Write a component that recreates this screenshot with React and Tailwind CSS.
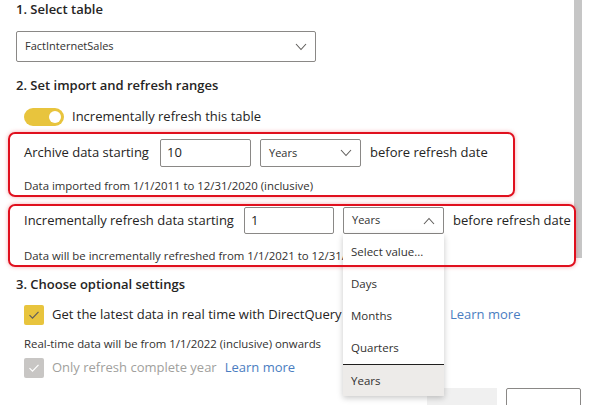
import React from 'react';

const Chevron = ({ up = false }) => (
  <svg width="12" height="8" viewBox="0 0 12 8" fill="none" className="shrink-0">
    {up ? (
      <path d="M1 7L6 1.5L11 7" stroke="#605e5c" strokeWidth="1.1" />
    ) : (
      <path d="M1 1L6 6.5L11 1" stroke="#605e5c" strokeWidth="1.1" />
    )}
  </svg>
);

const Check = ({ color }) => (
  <svg width="12" height="10" viewBox="0 0 12 10" fill="none">
    <path d="M1.5 5.2L4.5 8.2L10.5 1.8" stroke={color} strokeWidth="1.2" />
  </svg>
);

const Select = ({ value, className = '', open = false }) => (
  <div
    className={`flex items-center justify-between border border-[#8a8886] rounded-[2px] bg-white pl-2 pr-2 text-[11px] text-[#323130] ${className}`}
  >
    <span>{value}</span>
    <Chevron up={open} />
  </div>
);

// red annotation frame drawn above the content
const RedBox = ({ className = '', children }) => (
  <div className={`relative ${className}`}>
    {children}
    <div className="pointer-events-none absolute inset-0 z-20 rounded-[7px] border-2 border-[#e0101e] shadow-[0_0_4px_rgba(224,16,30,0.35)]" />
  </div>
);

const options = ['Select value...', 'Days', 'Months', 'Quarters', 'Years'];

export default function App() {
  return (
    <div className="relative h-[405px] w-[590px] overflow-hidden bg-white font-['Segoe_UI','Open_Sans',sans-serif] text-[#252423]">
      {/* scrollbar */}
      <div className="absolute right-[8px] top-0 h-[258px] w-[8px] bg-[#c6c6c6]" />

      <div className="pl-4">
        <h2 className="h-[18px] text-[13px] font-semibold leading-[18px]">1. Select table</h2>
        <Select value="FactInternetSales" className="mt-[13px] h-[31px] w-[300px]" />

        <h2 className="mt-[14px] h-[18px] text-[13px] font-semibold leading-[18px]">2. Set import and refresh ranges</h2>

        <div className="ml-2 mt-[14px] flex h-[18px] items-center gap-2">
          <div className="flex h-[18px] w-[40px] items-center justify-end rounded-full bg-[#e8c43d] pr-[3px]">
            <div className="h-[12px] w-[12px] rounded-full bg-white" />
          </div>
          <span className="text-[13px]">Incrementally refresh this table</span>
        </div>
      </div>

      <RedBox className="ml-2 mt-[6px] h-[65px] w-[507px] pl-4 pt-[7px]">
        <div className="flex h-[28px] items-center text-[13px]">
          <span className="w-[136px]">Archive data starting</span>
          <div className="flex h-[28px] w-[91px] items-center border border-[#8a8886] rounded-[2px] px-1.5 text-[13px]">10</div>
          <Select value="Years" className="ml-[9px] h-[28px] w-[101px]" />
          <span className="ml-[9px]">before refresh date</span>
        </div>
        <p className="mt-[12px] text-[11.4px] leading-[14px] text-[#323130]">Data imported from 1/1/2011 to 12/31/2020 (inclusive)</p>
      </RedBox>

      <RedBox className="ml-2 mt-[7px] h-[63px] w-[568px] pl-4 pt-[3px]">
        <div className="flex h-[27px] items-center whitespace-nowrap text-[13px]">
          <span className="w-[220px]">Incrementally refresh data starting</span>
          <div className="flex h-[27px] w-[90px] items-center border border-[#8a8886] rounded-[2px] px-1.5 text-[13px]">1</div>
          <div className="relative ml-[9px]">
            <Select value="Years" open className="h-[27px] w-[101px]" />
            <div className="absolute left-0 top-[27px] z-10 w-[101px] bg-white pt-[2px] shadow-[0_2px_6px_rgba(0,0,0,0.22)]">
              {options.map((o) => (
                <div
                  key={o}
                  className={`flex h-[32px] items-center pl-2 text-[11.5px] text-[#323130] ${
                    o === 'Years' ? 'border-t border-[#201f1e] bg-[#edebe9]' : ''
                  }`}
                >
                  {o}
                </div>
              ))}
            </div>
          </div>
          <span className="ml-[9px]">before refresh date</span>
        </div>
        {/* the rest of this line sits under the open list */}
        <p className="mt-[15px] w-[319px] overflow-hidden whitespace-nowrap text-[11.4px] leading-[14px] text-[#323130]">
          Data will be incrementally refreshed from 1/1/2021 to 12/31/2021 (inclusive)
        </p>
      </RedBox>

      <div className="pl-4">
        <h2 className="mt-[8px] h-[18px] text-[13px] font-semibold leading-[18px]">3. Choose optional settings</h2>

        <div className="ml-2 mt-[12px] flex h-[20px] items-center whitespace-nowrap">
          <div className="flex h-[20px] w-[20px] items-center justify-center rounded-[2px] bg-[#e8c43d]">
            <Check color="#605e5c" />
          </div>
          <span className="ml-2 w-[291px] overflow-hidden text-[13px]">Get the latest data in real time with DirectQuery (Premium only)</span>
          <a className="ml-[107px] text-[13px] text-[#4a7dc1]">Learn more</a>
        </div>

        <p className="ml-2 mt-[12px] text-[11.4px] leading-[14px] text-[#323130]">
          Real-time data will be from 1/1/2022 (inclusive) onwards
        </p>

        <div className="ml-2 mt-[7px] flex h-[20px] items-center gap-2 whitespace-nowrap">
          <div className="flex h-[20px] w-[20px] items-center justify-center rounded-[2px] bg-[#c8c6c4]">
            <Check color="#ffffff" />
          </div>
          <span className="text-[13px] text-[#a19f9d]">Only refresh complete year</span>
          <a className="text-[13px] text-[#4a7dc1]">Learn more</a>
        </div>

        <div className="mt-[10px] flex justify-end gap-[9px] pr-[9px]">
          <div className="h-[24px] w-[70px] bg-[#f0f0f0]" />
          <div className="h-[24px] w-[75px] rounded-[2px] border border-[#8a8886] bg-white" />
        </div>
      </div>
    </div>
  );
}
